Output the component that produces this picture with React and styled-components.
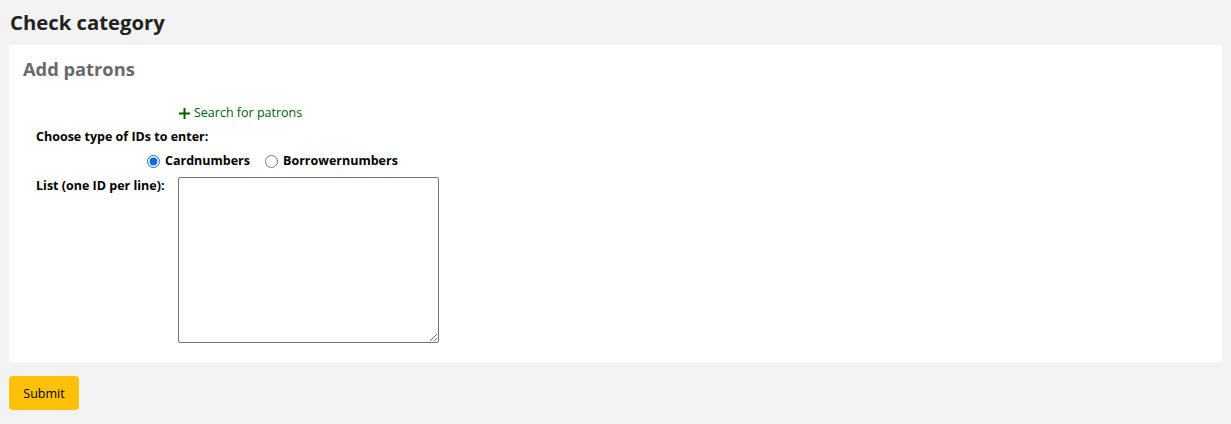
import React from "react";
import styled, { createGlobalStyle } from "styled-components";

const Global = createGlobalStyle`
  html, body { margin: 0; padding: 0; background: #f3f3f3; }
  body { font-family: "Open Sans", "Noto Sans", sans-serif; color: #000; }
  * { box-sizing: border-box; }
`;

const Page = styled.div`
  padding: 8px 9px 0 9px;
  display: flex;
  flex-direction: column;
`;

const Title = styled.h1`
  margin: 0 0 0 1px;
  font-size: 20.3px;
  line-height: 29px;
  font-weight: 700;
  color: #222;
`;

const Panel = styled.div`
  margin-top: 8px;
  background: #fff;
  padding: 12px 14px 20px 14px;
  height: 317px;
`;

const PanelTitle = styled.h2`
  margin: 0;
  font-size: 18.3px;
  line-height: 24px;
  font-weight: 700;
  color: #696969;
`;

const Form = styled.div`
  margin-top: 23px;
  display: flex;
  flex-direction: column;
  font-size: 12.5px;
`;

const Row = styled.div`
  display: flex;
  align-items: ${(p) => p.$align || "center"};
  padding-left: ${(p) => p.$indent || 0}px;
  margin-top: ${(p) => p.$mt || 0}px;
`;

const LinkAdd = styled.a`
  color: #006100;
  text-decoration: none;
  display: inline-flex;
  align-items: center;
  gap: 4px;
  line-height: 18px;
  cursor: pointer;
`;

const Label = styled.label`
  font-weight: 700;
  line-height: 18px;
  width: ${(p) => (p.$w ? p.$w + "px" : "auto")};
  padding-left: 13px;
  flex-shrink: 0;
`;

const RadioLabel = styled.label`
  display: inline-flex;
  align-items: center;
  font-weight: 700;
  line-height: 18px;
  margin-right: 15px;
  gap: 5px;
`;

const Radio = styled.input.attrs({ type: "radio" })`
  margin: 0;
  width: 13px;
  height: 13px;
  accent-color: #0b6bde;
`;

const TextArea = styled.textarea`
  width: 261px;
  height: 166px;
  border: 1px solid #767676;
  border-radius: 2px;
  padding: 2px;
  margin: 0;
  font-family: inherit;
`;

const Submit = styled.button`
  align-self: flex-start;
  margin-top: 14px;
  background: #ffc107;
  border: none;
  border-radius: 4px;
  padding: 0 14px;
  height: 34px;
  width: 70px;
  font-family: "Open Sans", "Noto Sans", sans-serif;
  font-size: 12.5px;
  color: #000;
  cursor: pointer;
`;

const PlusIcon = () => (
  <svg width="11" height="11" viewBox="0 0 11 11">
    <path d="M5.5 0v11M0 5.5h11" stroke="#006100" strokeWidth="2" />
  </svg>
);

export default function App() {
  return (
    <>
      <Global />
      <Page>
        <Title>Check category</Title>
        <Panel>
          <PanelTitle>Add patrons</PanelTitle>
          <Form>
            <Row $indent={156}>
              <LinkAdd>
                <PlusIcon />
                Search for patrons
              </LinkAdd>
            </Row>
            <Row $mt={6}>
              <Label>Choose type of IDs to enter:</Label>
            </Row>
            <Row $indent={124} $mt={6}>
              <RadioLabel>
                <Radio name="idtype" defaultChecked />
                Cardnumbers
              </RadioLabel>
              <RadioLabel>
                <Radio name="idtype" />
                Borrowernumbers
              </RadioLabel>
            </Row>
            <Row $align="flex-start" $mt={7}>
              <Label $w={155}>List (one ID per line):</Label>
              <TextArea />
            </Row>
          </Form>
        </Panel>
        <Submit>Submit</Submit>
      </Page>
    </>
  );
}
